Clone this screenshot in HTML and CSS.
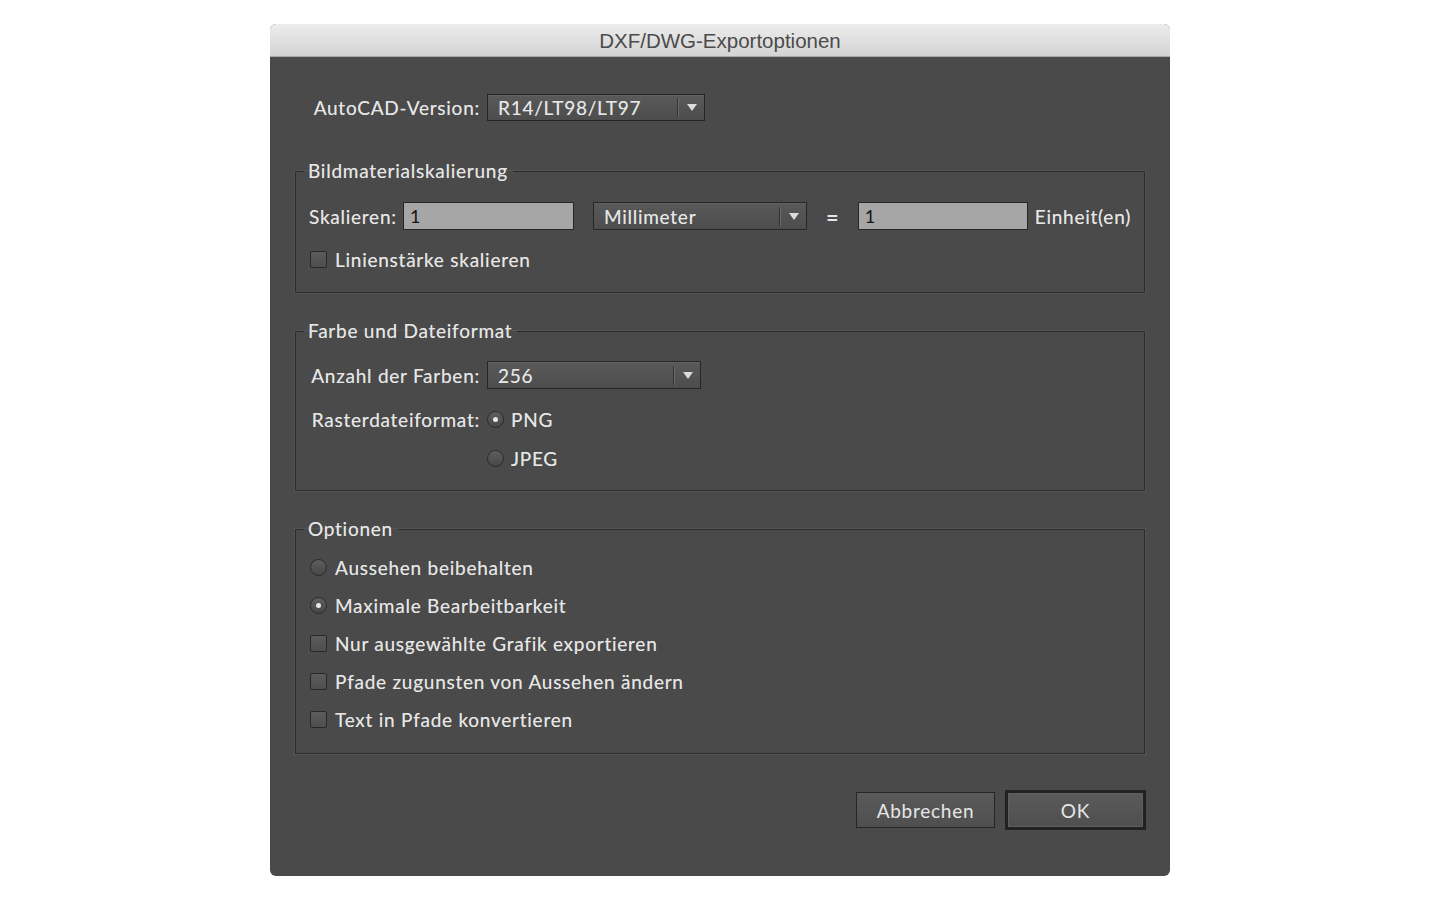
FILE: index.html
```html
<!DOCTYPE html>
<html lang="de">
<head>
<meta charset="utf-8">
<title>DXF/DWG-Exportoptionen</title>
<link rel="stylesheet" href="styles.css">
</head>
<body>
<div class="dialog">
  <div class="titlebar">DXF/DWG-Exportoptionen</div>
  <div class="body">
    <div class="row top-row">
      <span class="lbl lbl-wide">AutoCAD-Version:</span>
      <div class="select sel-version"><span class="sel-text">R14/LT98/LT97</span><span class="sep"></span><span class="arrow"></span></div>
    </div>

    <fieldset class="group g1">
      <legend>Bildmaterialskalierung</legend>
      <div class="row scale-row">
        <span class="lbl lbl-scale">Skalieren:</span>
        <div class="input in-1">1</div>
        <div class="select sel-unit"><span class="sel-text">Millimeter</span><span class="sep"></span><span class="arrow"></span></div>
        <span class="eq">=</span>
        <div class="input in-2">1</div>
        <span class="lbl unit-lbl">Einheit(en)</span>
      </div>
      <label class="row check-row first-check">
        <span class="box"></span><span class="opt">Linienstärke skalieren</span>
      </label>
    </fieldset>

    <fieldset class="group g2">
      <legend>Farbe und Dateiformat</legend>
      <div class="row colors-row">
        <span class="lbl lbl-col">Anzahl der Farben:</span>
        <div class="select sel-colors"><span class="sel-text">256</span><span class="sep"></span><span class="arrow"></span></div>
      </div>
      <div class="row raster-row">
        <span class="lbl lbl-col">Rasterdateiformat:</span>
        <span class="radio checked"></span><span class="opt opt-tight">PNG</span>
      </div>
      <div class="row raster-row jpeg-row">
        <span class="lbl lbl-col"></span>
        <span class="radio"></span><span class="opt opt-tight">JPEG</span>
      </div>
    </fieldset>

    <fieldset class="group g3">
      <legend>Optionen</legend>
      <div class="opt-list">
        <div class="row check-row"><span class="radio"></span><span class="opt">Aussehen beibehalten</span></div>
        <div class="row check-row"><span class="radio checked"></span><span class="opt">Maximale Bearbeitbarkeit</span></div>
        <div class="row check-row"><span class="box"></span><span class="opt">Nur ausgewählte Grafik exportieren</span></div>
        <div class="row check-row"><span class="box"></span><span class="opt">Pfade zugunsten von Aussehen ändern</span></div>
        <div class="row check-row"><span class="box"></span><span class="opt">Text in Pfade konvertieren</span></div>
      </div>
    </fieldset>

    <div class="buttons">
      <button class="btn btn-cancel">Abbrechen</button>
      <button class="btn btn-ok">OK</button>
    </div>
  </div>
</div>
</body>
</html>
```

FILE: styles.css
```css
html, body {
  margin: 0;
  padding: 0;
  background: #ffffff;
}

body {
  font-family: "Lato", "Open Sans", sans-serif;
}

.dialog {
  width: 900px;
  height: 852px;
  margin: 24px 0 0 270px;
  background: #4a4a4a;
  border-radius: 6px;
  overflow: hidden;
  display: flex;
  flex-direction: column;
}

.titlebar {
  height: 32px;
  flex: 0 0 auto;
  background: linear-gradient(#ededed, #d3d3d3);
  border-bottom: 1px solid #a9a9a9;
  color: #4b4b4b;
  font-family: "Liberation Sans", Arial, sans-serif;
  font-size: 20.5px;
  line-height: 33px;
  text-align: center;
}

.body {
  flex: 1 1 auto;
  display: flex;
  flex-direction: column;
  padding: 0 25px;
  color: #e6e6e6;
  font-size: 19px;
  letter-spacing: 0.75px;
  text-shadow: 0 0 0.4px rgba(230,230,230,0.6);
}

.row {
  display: flex;
  align-items: center;
}

.lbl {
  white-space: nowrap;
}

.top-row {
  margin-top: 37px;
  height: 27px;
}

.lbl-wide {
  width: 185px;
  text-align: right;
  margin-right: 7px;
}

/* select / dropdown */
.select {
  box-sizing: border-box;
  height: 28px;
  border: 1px solid #262626;
  background: linear-gradient(#595959, #4d4d4d);
  display: flex;
  align-items: center;
  padding-left: 10px;
  color: #e6e6e6;
  box-shadow: inset 0 1px 0 rgba(255,255,255,0.06);
}

.sel-text {
  flex: 1 1 auto;
}

.sep {
  width: 1px;
  height: 19px;
  background: #333;
  box-shadow: 1px 0 0 #6a6a6a;
  margin-right: 9px;
}

.arrow {
  width: 0;
  height: 0;
  border-left: 5px solid transparent;
  border-right: 5px solid transparent;
  border-top: 7px solid #dcdcdc;
  margin-right: 7px;
}

.sel-version {
  width: 218px;
  height: 27px;
}

.sel-unit {
  width: 214px;
  margin-left: 19px;
}

.sel-colors {
  width: 214px;
}

/* inputs */
.input {
  box-sizing: border-box;
  height: 28px;
  border: 1px solid #262626;
  background: #a6a6a6;
  color: #141414;
  text-shadow: none;
  padding-left: 6px;
  line-height: 26px;
  font-size: 18px;
}

.in-1 { width: 171px; }
.in-2 { width: 170px; }

.eq {
  width: 51px;
  text-align: center;
  font-size: 21px;
  font-weight: 700;
  letter-spacing: 0;
}

.unit-lbl {
  margin-left: 7px;
}

/* groups */
.group {
  margin: 0;
  padding: 0 13px 23px 13px;
  border: 1px solid #2d2d2d;
  box-shadow: 0 0 0 1px #545454;
  min-width: 0;
}

.group legend {
  padding: 0 5px 0 4px;
  margin-left: -5px;
  line-height: 22px;
  height: 22px;
  color: #e6e6e6;
}

.g1 { margin-top: 39px; }
.g2 { margin-top: 27px; padding-bottom: 22px; }
.g3 { margin-top: 27px; padding-bottom: 24px; }

.scale-row {
  margin-top: 20px;
  height: 28px;
}

.lbl-scale {
  width: 94px;
}

.check-row {
  height: 20px;
}

.first-check {
  margin-top: 19px;
}

.box {
  box-sizing: border-box;
  width: 17px;
  height: 17px;
  margin-left: 1px;
  border: 1px solid #282828;
  border-radius: 2px;
  background: linear-gradient(#5c5c5c, #4e4e4e);
  flex: 0 0 auto;
}

.radio {
  box-sizing: border-box;
  width: 17px;
  height: 17px;
  margin-left: 1px;
  border: 1px solid #2a2a2a;
  border-radius: 50%;
  background: linear-gradient(#5e5e5e, #474747);
  flex: 0 0 auto;
  display: flex;
  align-items: center;
  justify-content: center;
}

.radio.checked::after {
  content: "";
  width: 5px;
  height: 5px;
  border-radius: 50%;
  background: #e8e8e8;
}

.opt {
  margin-left: 8px;
  white-space: nowrap;
}

.opt-tight {
  margin-left: 7px;
}

.colors-row {
  margin-top: 19px;
  height: 28px;
}

.lbl-col {
  width: 171px;
  text-align: right;
  margin-right: 7px;
}

.raster-row {
  margin-top: 20px;
  height: 20px;
}

.raster-row .radio {
  margin-left: 0;
}

.jpeg-row {
  margin-top: 19px;
}

.opt-list {
  margin-top: 17px;
  display: flex;
  flex-direction: column;
  gap: 18px;
}

/* buttons */
.buttons {
  margin-top: 36px;
  margin-right: -1px;
  display: flex;
  justify-content: flex-end;
  align-items: center;
  gap: 10px;
}

.btn {
  font-family: inherit;
  font-size: 19px;
  letter-spacing: 0.75px;
  color: #e6e6e6;
  background: linear-gradient(#5a5a5a, #4f4f4f);
  border: 1px solid #262626;
  box-sizing: border-box;
  padding: 0;
  cursor: default;
}

.btn-cancel {
  width: 139px;
  height: 36px;
}

.btn-ok {
  width: 141px;
  height: 40px;
  border: 3px solid #222222;
  box-shadow: inset 0 0 0 1px #5f5f5f;
}
```
